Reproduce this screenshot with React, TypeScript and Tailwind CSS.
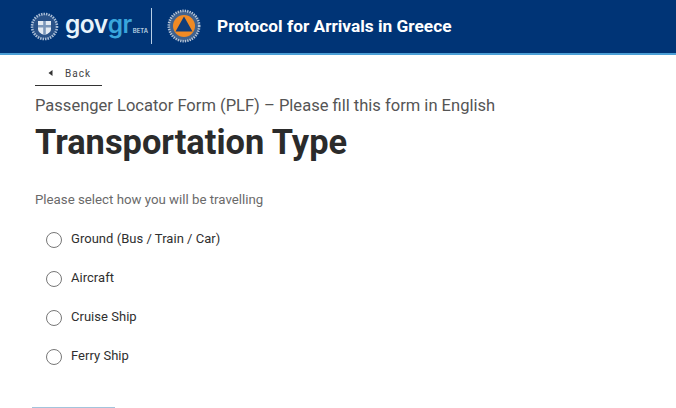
export default function App() {
  const options = ["Ground (Bus / Train / Car)", "Aircraft", "Cruise Ship", "Ferry Ship"];
  return (
    <div className="w-[676px] h-[408px] overflow-hidden bg-white flex flex-col font-['Roboto',sans-serif]">
      <header className="h-[55px] shrink-0 bg-[#003476] border-b-2 border-[#4b9fd6] flex items-center pl-[30px] pb-[1px]">
        <svg width="29" height="29" viewBox="0 0 29 29" className="shrink-0">
          <circle cx="14.5" cy="14.5" r="12.5" fill="#2a5288" stroke="#a9bdd6" strokeWidth="2.6" strokeDasharray="1.5 1" />
          <path d="M8 9 H21 V17 Q21 21 14.5 23 Q8 21 8 17 Z" fill="#e3eaf3" />
          <path d="M13.2 9 H15.8 V23 H13.2 Z M8 13 H21 V15.4 H8 Z" fill="#7a96ba" />
        </svg>
        <div className="flex items-baseline ml-[6px] mb-[5px] text-[24.5px] leading-[30px] font-semibold tracking-[-0.5px] w-[80px] font-['Inter',sans-serif]">
          <span className="text-[#e8f3fb]">gov</span>
          <span className="text-[#3aa6dc]">gr</span>
          <span className="text-[6px] font-medium tracking-normal text-[#d5e3f0] ml-[1px] leading-none">BETA</span>
        </div>
        <div className="w-[1px] h-[36px] bg-[#b8cfe6] ml-[6px]" />
        <svg width="34" height="34" viewBox="0 0 34 34" className="ml-[15px] shrink-0">
          <circle cx="17" cy="17" r="15.5" fill="#3f628f" />
          <circle cx="17" cy="17" r="15.2" fill="none" stroke="#b8c7da" strokeWidth="2.6" strokeDasharray="1.2 1.2" />
          <circle cx="17" cy="17" r="11" fill="#f08a24" />
          <path d="M17 7.5 L25.5 22.5 H8.5 Z" fill="#0f3c7a" />
        </svg>
        <h1 className="ml-[16px] text-[17.3px] leading-[20px] font-bold text-white whitespace-nowrap">Protocol for Arrivals in Greece</h1>
      </header>
      <main className="pl-[35px] flex flex-col items-start">
        <div className="h-[31px] w-[67px] border-b border-[#333] flex items-center pl-[13px] gap-[12px] pt-[6px] text-[#444] text-[10px] tracking-[1px]">
          <svg width="5" height="6" viewBox="0 0 5 6"><path d="M4.5 0 V6 L0.5 3 Z" fill="#333" /></svg>
          <span>Back</span>
        </div>
        <p className="mt-[10px] text-[16.55px] leading-[20px] text-[#555] whitespace-nowrap">Passenger Locator Form (PLF) – Please fill this form in English</p>
        <h2 className="mt-[4px] text-[34.4px] leading-[44px] font-bold text-[#2b2b2b] whitespace-nowrap">Transportation Type</h2>
        <p className="mt-[26px] text-[13.25px] leading-[20px] text-[#6a6a6a]">Please select how you will be travelling</p>
        <div className="mt-[19px] flex flex-col gap-[19px] pl-[11px]">
          {options.map((o) => (
            <label key={o} className="h-[20px] flex items-center gap-[9px] text-[13px] tracking-[0.03px] text-[#2f2f2f]">
              <span className="w-[16px] h-[16px] rounded-full border-[1.5px] border-[#777] mt-[1px]" />
              <span className="mb-[1px]">{o}</span>
            </label>
          ))}
        </div>
        <div className="mt-[41px] ml-[-3px] w-[83px] h-[20px] bg-[#a3c4dc] shrink-0" />
      </main>
    </div>
  );
}
